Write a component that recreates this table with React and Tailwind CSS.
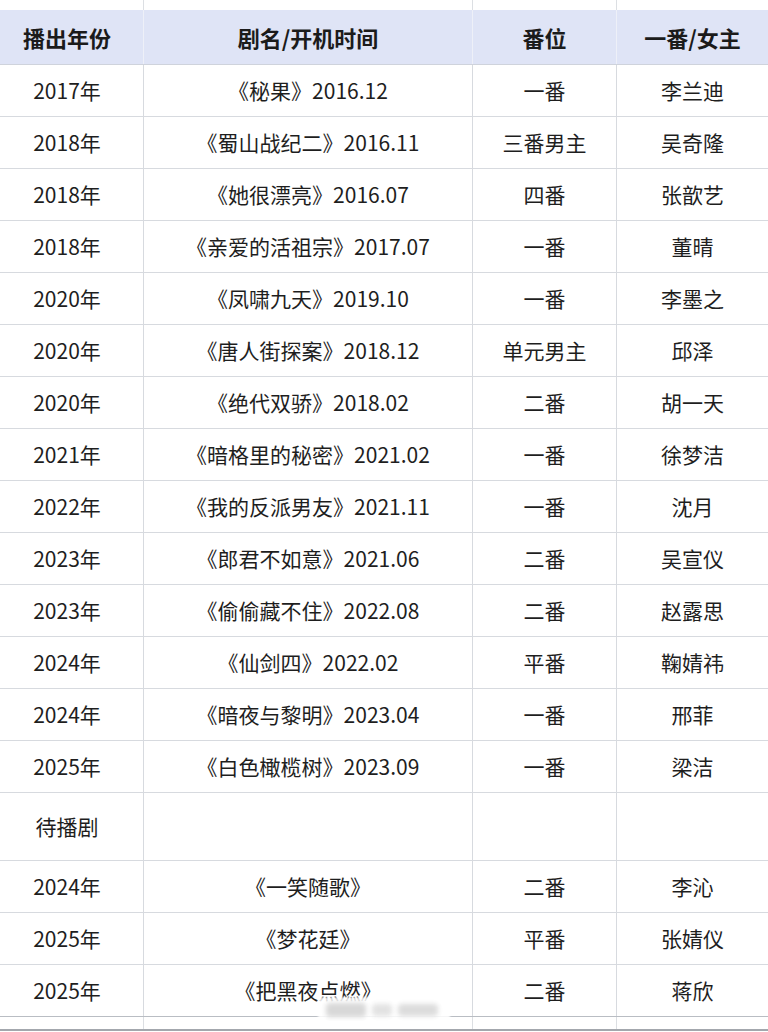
import React from "react";

const rows = [
  ["2017年", "《秘果》2016.12", "一番", "李兰迪"],
  ["2018年", "《蜀山战纪二》2016.11", "三番男主", "吴奇隆"],
  ["2018年", "《她很漂亮》2016.07", "四番", "张歆艺"],
  ["2018年", "《亲爱的活祖宗》2017.07", "一番", "董晴"],
  ["2020年", "《凤啸九天》2019.10", "一番", "李墨之"],
  ["2020年", "《唐人街探案》2018.12", "单元男主", "邱泽"],
  ["2020年", "《绝代双骄》2018.02", "二番", "胡一天"],
  ["2021年", "《暗格里的秘密》2021.02", "一番", "徐梦洁"],
  ["2022年", "《我的反派男友》2021.11", "一番", "沈月"],
  ["2023年", "《郎君不如意》2021.06", "二番", "吴宣仪"],
  ["2023年", "《偷偷藏不住》2022.08", "二番", "赵露思"],
  ["2024年", "《仙剑四》2022.02", "平番", "鞠婧祎"],
  ["2024年", "《暗夜与黎明》2023.04", "一番", "邢菲"],
  ["2025年", "《白色橄榄树》2023.09", "一番", "梁洁"],
];

const upcoming = [
  ["2024年", "《一笑随歌》", "二番", "李沁"],
  ["2025年", "《梦花廷》", "平番", "张婧仪"],
  ["2025年", "《把黑夜点燃》", "二番", "蒋欣"],
];

const font = { fontFamily: '"Noto Sans CJK SC", "Noto Sans", sans-serif' };

function Row({ cells, height = "h-[52px]", line = "border-[#d7dadf]" }) {
  return (
    <div className={`grid grid-cols-[143px_329px_144px_1fr] border-b ${line} ${height}`}>
      {cells.map((c, i) => (
        <div
          key={i}
          className={`flex items-center justify-center text-[21px] text-[#1e1e1e] ${
            i > 0 ? "border-l border-[#d7dadf]" : "pr-[9px]"
          }`}
        >
          {c}
        </div>
      ))}
    </div>
  );
}

export default function App() {
  return (
    <div className="w-[768px] h-[1032px] overflow-hidden bg-white" style={font}>
      {/* strip above header */}
      <div className="grid grid-cols-[143px_329px_144px_1fr] h-[10px]">
        <div />
        <div className="border-l border-[#dcdfe3]" />
        <div className="border-l border-[#dcdfe3]" />
        <div className="border-l border-[#dcdfe3]" />
      </div>

      {/* header */}
      <div className="grid grid-cols-[143px_329px_144px_1fr] h-[55px] bg-[#dfe4f6] border-b border-[#cfd3dc]">
        <div className="flex items-center justify-center pr-[9px] text-[22px] font-bold text-[#1b1b1b]">播出年份</div>
        <div className="flex items-center justify-center border-l border-[#eef0f8] text-[22px] font-bold text-[#1b1b1b]">剧名/开机时间</div>
        <div className="flex items-center justify-center border-l border-[#eef0f8] text-[22px] font-bold text-[#1b1b1b]">番位</div>
        <div className="flex items-center justify-center border-l border-[#eef0f8] text-[22px] font-bold text-[#1b1b1b]">一番/女主</div>
      </div>

      {rows.map((r, i) => (
        <Row key={i} cells={r} />
      ))}

      <Row cells={["待播剧", "", "", ""]} height="h-[68px]" />

      {upcoming.map((r, i) => (
        <Row key={i} cells={r} line={i === 2 ? "border-[#b9bdc3]" : "border-[#d7dadf]"} />
      ))}

      {/* strip below table */}
      <div className="relative grid grid-cols-[143px_329px_144px_1fr] h-[14px] border-b-2 border-[#a3a7ad]">
        <div />
        <div className="border-l border-[#dcdfe3]" />
        <div className="border-l border-[#dcdfe3]" />
        <div className="border-l border-[#dcdfe3]" />
        {/* watermark blur */}
        <div className="absolute left-[318px] top-[-20px] w-[132px] h-[26px] bg-white/85 rounded-sm blur-[1px] flex items-center gap-[6px] px-[8px]">
          <div className="w-[40px] h-[14px] bg-[#d8d8d8] rounded-sm blur-[2px]" />
          <div className="w-[20px] h-[12px] bg-[#e2e2e2] rounded-sm blur-[2px]" />
          <div className="w-[40px] h-[12px] bg-[#dcdcdc] rounded-sm blur-[2px]" />
        </div>
      </div>
    </div>
  );
}
